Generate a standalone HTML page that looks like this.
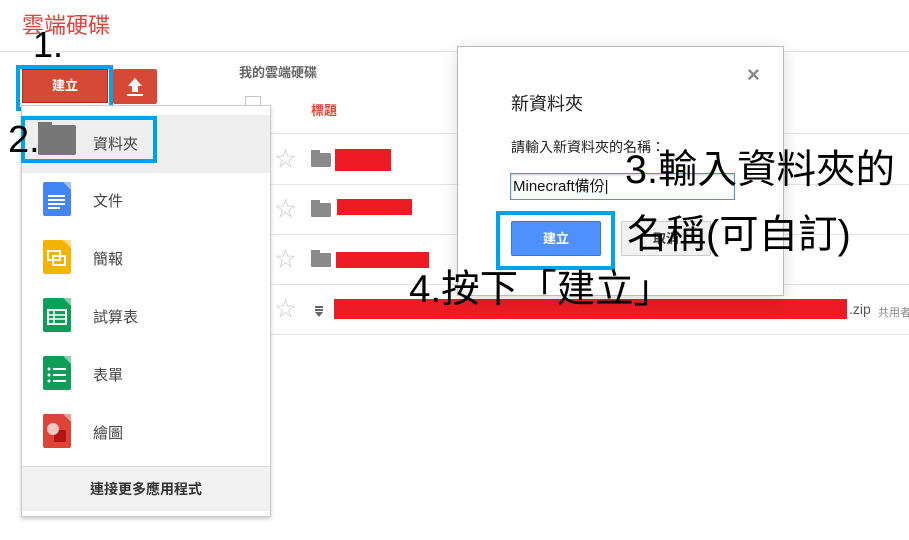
<!DOCTYPE html>
<html><head><meta charset="utf-8"><style>
*{margin:0;padding:0;box-sizing:border-box}
body{width:909px;height:540px;background:#fff;position:relative;overflow:hidden;font-family:"Liberation Sans","Noto Sans CJK TC",sans-serif}
.a{position:absolute;white-space:nowrap}
.hl{position:absolute;height:1px;background:#e5e5e5}
.bb{position:absolute;border:4px solid #00a2e8}
.big{position:absolute;color:#000;font-family:"Liberation Sans","Noto Sans CJK TC",sans-serif;line-height:1;white-space:nowrap}
.mi{position:absolute;left:93px;font-size:15px;color:#444}
.ic{position:absolute;left:43px;width:28px;height:34px;border-radius:2px}
.star{position:absolute;left:275px;font-size:21px;color:#ccc;line-height:1}
.fold{position:absolute;left:311px;width:20px;height:14px;background:#8a8a8a;border-radius:1px}
.fold:before{content:"";position:absolute;left:0;top:-3px;width:9px;height:4px;background:#8a8a8a}
.red{position:absolute;background:#ed1c24}
</style></head><body>
<div class="a" style="left:22px;top:8px;font-size:22px;color:#e0413a">雲端硬碟</div>
<div class="hl" style="left:0;top:51px;width:909px"></div>
<div class="big" style="left:33px;top:27px;font-size:36px">1.</div>

<div class="a" style="left:22px;top:69px;width:86px;height:34px;background:#d64937;border:1px solid #b0281a;color:#fff;font-size:13px;font-weight:bold;text-align:center;line-height:32px">建立</div>
<div class="bb" style="left:16px;top:65px;width:97px;height:46px"></div>
<div class="a" style="left:113px;top:69px;width:44px;height:35px;background:#d64937;border-radius:2px">
 <svg width="44" height="35"><path d="M22 9 L15 17 H19 V23 H25 V17 H29 Z" fill="#fff"/><rect x="14" y="25" width="16" height="2" fill="#fff"/></svg></div>

<div class="a" style="left:239px;top:62px;font-size:13px;color:#666;font-weight:bold">我的雲端硬碟</div>
<div class="a" style="left:245px;top:96px;width:16px;height:16px;border:1px solid #c6c6c6;background:#fff"></div>
<div class="a" style="left:311px;top:100px;font-size:13px;color:#dd4b39;font-weight:bold">標題</div>
<div class="hl" style="left:270px;top:133px;width:639px"></div>
<div class="hl" style="left:270px;top:184px;width:639px"></div>
<div class="hl" style="left:270px;top:234px;width:639px"></div>
<div class="hl" style="left:270px;top:284px;width:639px"></div>
<div class="hl" style="left:270px;top:334px;width:639px"></div>
<div class="star" style="top:149px">☆</div>
<div class="star" style="top:199px">☆</div>
<div class="star" style="top:249px">☆</div>
<div class="star" style="top:299px">☆</div>
<div class="fold" style="top:153px"></div>
<div class="fold" style="top:203px"></div>
<div class="fold" style="top:253px"></div>
<div class="a" style="left:315px;top:305px;width:8px;height:12px"><svg width="8" height="12"><rect y="0" width="8" height="2" fill="#666"/><rect y="3" width="8" height="2" fill="#666"/><path d="M0 6H8L4 11Z" fill="#666"/></svg></div>
<div class="red" style="left:335px;top:149px;width:56px;height:22px"></div>
<div class="red" style="left:337px;top:199px;width:75px;height:16px"></div>
<div class="red" style="left:336px;top:252px;width:93px;height:16px"></div>
<div class="red" style="left:334px;top:299px;width:513px;height:20px"></div>
<div class="a" style="left:849px;top:301px;font-size:14px;color:#555">.zip</div>
<div class="a" style="left:878px;top:304px;font-size:11px;color:#888">共用者</div>

<div class="a" style="left:21px;top:105px;width:250px;height:412px;background:#fff;border:1px solid #ccc;box-shadow:0 2px 4px rgba(0,0,0,.2)">
 <div class="a" style="left:0;top:9px;width:248px;height:58px;background:#eee"></div>
 <div class="a" style="left:0;top:360px;width:248px;height:45px;background:#f1f1f1;border-top:1px solid #ddd;text-align:center;font-size:14px;font-weight:bold;color:#333;line-height:44px">連接更多應用程式</div>
</div>
<div class="a" style="left:38px;top:125px;width:38px;height:30px;background:#777;border-radius:2px"></div>
<div class="a" style="left:38px;top:122px;width:14px;height:5px;background:#777"></div>
<div class="mi" style="top:133px">資料夾</div>
<div class="bb" style="left:21px;top:116px;width:136px;height:47px"></div>
<div class="big" style="left:8px;top:121px;font-size:38px">2.</div>

<div class="ic" style="top:182px;background:#4285f4"><svg width="28" height="34"><rect x="5" y="13" width="17" height="2" fill="#fff"/><rect x="5" y="17" width="17" height="2" fill="#fff"/><rect x="5" y="21" width="17" height="2" fill="#fff"/><rect x="5" y="25" width="12" height="2" fill="#fff"/><path d="M20 0H28V8Z" fill="#a1c2fa"/></svg></div>
<div class="mi" style="top:190px">文件</div>
<div class="ic" style="top:240px;background:#f4b400"><svg width="28" height="34"><rect x="5" y="11" width="12" height="9" fill="none" stroke="#fff" stroke-width="2"/><rect x="10" y="16" width="12" height="9" fill="none" stroke="#fff" stroke-width="2"/><path d="M20 0H28V8Z" fill="#fadb8a"/></svg></div>
<div class="mi" style="top:248px">簡報</div>
<div class="ic" style="top:298px;background:#0f9d58"><svg width="28" height="34"><rect x="5" y="12" width="18" height="14" fill="none" stroke="#fff" stroke-width="2"/><path d="M5 17H23M5 21H23M11 12V26" stroke="#fff" stroke-width="1.5"/><path d="M20 0H28V8Z" fill="#87ceac"/></svg></div>
<div class="mi" style="top:306px">試算表</div>
<div class="ic" style="top:356px;background:#0f9d58"><svg width="28" height="34"><circle cx="6" cy="13" r="1.5" fill="#fff"/><circle cx="6" cy="19" r="1.5" fill="#fff"/><circle cx="6" cy="25" r="1.5" fill="#fff"/><path d="M10 13H23M10 19H23M10 25H23" stroke="#fff" stroke-width="2"/><path d="M20 0H28V8Z" fill="#87ceac"/></svg></div>
<div class="mi" style="top:364px">表單</div>
<div class="ic" style="top:414px;background:#db4437"><svg width="28" height="34"><rect x="11" y="16" width="12" height="12" fill="#b31412"/><circle cx="10" cy="15" r="6" fill="#f5c6c2"/><path d="M20 0H28V8Z" fill="#ee9d96"/></svg></div>
<div class="mi" style="top:422px">繪圖</div>

<div class="a" style="left:457px;top:46px;width:327px;height:250px;background:#fff;border:1px solid #bbb;box-shadow:0 4px 16px rgba(0,0,0,.15)"></div>
<div class="a" style="left:747px;top:62px;font-size:22px;color:#888;font-weight:bold">×</div>
<div class="a" style="left:511px;top:90px;font-size:18px;color:#222">新資料夾</div>
<div class="a" style="left:511px;top:137px;font-size:14px;color:#222">請輸入新資料夾的名稱：</div>
<div class="a" style="left:510px;top:173px;width:225px;height:27px;border:1px solid #4d90fe;box-shadow:inset 0 1px 2px rgba(0,0,0,.2);font-size:15px;color:#111;padding:3px 2px;line-height:20px">Minecraft備份|</div>
<div class="a" style="left:511px;top:221px;width:90px;height:35px;background:#4d90fe;border:1px solid #3079ed;border-radius:2px;color:#fff;font-size:13px;font-weight:bold;text-align:center;line-height:33px">建立</div>
<div class="bb" style="left:496px;top:211px;width:119px;height:59px"></div>
<div class="a" style="left:621px;top:221px;width:90px;height:35px;background:#f1f1f1;border:1px solid #ccc;border-radius:2px;color:#444;font-size:13px;font-weight:bold;text-align:center;line-height:33px">取消</div>

<div class="big" style="left:625px;top:151px;font-size:39.5px">3.輸入資料夾的</div>
<div class="big" style="left:627px;top:216px;font-size:39.5px">名稱(可自訂)</div>
<div class="big" style="left:409px;top:271px;font-size:38.5px">4.按下「建立」</div>
</body></html>
